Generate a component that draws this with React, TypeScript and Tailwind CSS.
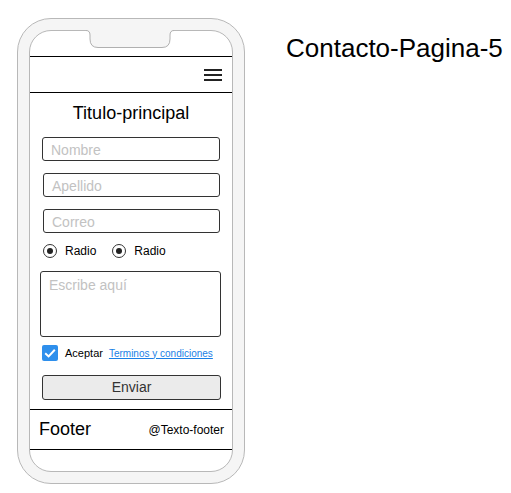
import React from "react";

function RadioDot() {
  return (
    <span className="flex h-[14px] w-[14px] items-center justify-center rounded-full border-[1.5px] border-[#333]">
      <span className="h-[6px] w-[6px] rounded-full bg-[#222]" />
    </span>
  );
}

export default function App() {
  return (
    <div className="flex min-h-[493px] w-[511px] items-start bg-white font-['Liberation_Sans',Arial,sans-serif] text-black">
      {/* Phone frame */}
      <div className="ml-[17px] mt-[18px] h-[466px] w-[228px] rounded-[34px] border border-[#b8b8b8] bg-[#f5f5f5] p-[11px]">
        <div className="relative flex h-full flex-col rounded-[22px] border border-[#b8b8b8] bg-white">
          {/* Notch */}
          <svg
            className="absolute left-[56px] top-[-1px]"
            width="88"
            height="19"
            viewBox="0 0 88 19"
          >
            <path
              d="M0 0 L0 0.5 Q4 0.5 4 5 L4 9 Q4 17.5 12 17.5 L76 17.5 Q84 17.5 84 9 L84 5 Q84 0.5 88 0.5 L88 0 Z"
              fill="#f5f5f5"
            />
            <path
              d="M0 0.5 Q4 0.5 4 5 L4 9 Q4 17.5 12 17.5 L76 17.5 Q84 17.5 84 9 L84 5 Q84 0.5 88 0.5"
              fill="none"
              stroke="#b0b0b0"
              strokeWidth="1"
            />
          </svg>

          <div className="h-[25px]" />

          {/* Header */}
          <div className="flex h-[37px] items-center justify-end border-y border-black pr-[10px]">
            <div className="flex w-[18px] flex-col gap-[3px]">
              <span className="h-[2px] bg-[#222]" />
              <span className="h-[2px] bg-[#222]" />
              <span className="h-[2px] bg-[#222]" />
            </div>
          </div>

          <h2 className="mt-[8px] text-center text-[18px] leading-[24px]">Titulo-principal</h2>

          {/* Form */}
          <div className="mx-[12px] mt-[12px] flex h-[24px] items-center rounded-[3px] border border-[#333] pl-[8px] pt-[2px] text-[14px] text-[#c2c2c2]">
            Nombre
          </div>
          <div className="ml-[13px] mr-[12px] mt-[12px] flex h-[24px] items-center rounded-[3px] border border-[#333] pl-[8px] pt-[2px] text-[14px] text-[#c2c2c2]">
            Apellido
          </div>
          <div className="ml-[13px] mr-[12px] mt-[12px] flex h-[24px] items-center rounded-[3px] border border-[#333] pl-[8px] pt-[2px] text-[14px] text-[#c2c2c2]">
            Correo
          </div>

          <div className="ml-[13px] mt-[11px] flex h-[14px] items-center text-[12px]">
            <RadioDot />
            <span className="ml-[8px]">Radio</span>
            <span className="ml-[16px]">
              <RadioDot />
            </span>
            <span className="ml-[8px]">Radio</span>
          </div>

          <div className="ml-[10px] mr-[11px] mt-[13px] h-[66px] rounded-[3px] border border-[#333] pl-[8px] pt-[3px] text-[14px] text-[#c2c2c2]">
            Escribe aquí
          </div>

          <div className="ml-[12px] mt-[8px] flex h-[16px] items-center">
            <svg width="16" height="16" viewBox="0 0 16 16">
              <rect width="16" height="16" rx="2" fill="#2e8fec" />
              <path d="M3.2 8.2 L6.6 11.4 L12.8 4.8" fill="none" stroke="#fff" strokeWidth="2" />
            </svg>
            <span className="ml-[7px] text-[11px]">Aceptar</span>
            <span className="ml-[6px] text-[10px] text-[#1a7fe6] underline">Terminos y condiciones</span>
          </div>

          <div className="ml-[12px] mr-[11px] mt-[14px] flex h-[25px] items-center justify-center rounded-[3px] border border-[#333] bg-[#ebebeb] text-[14px] text-[#333]">
            Enviar
          </div>

          {/* Footer */}
          <div className="mt-[9px] flex h-[41px] items-center justify-between border-y border-black pl-[9px] pr-[8px]">
            <span className="text-[18px]">Footer</span>
            <span className="text-[12px]">@Texto-footer</span>
          </div>
        </div>
      </div>

      <h1 className="ml-[41px] mt-[33px] text-[26px] leading-[30px]">Contacto-Pagina-5</h1>
    </div>
  );
}
